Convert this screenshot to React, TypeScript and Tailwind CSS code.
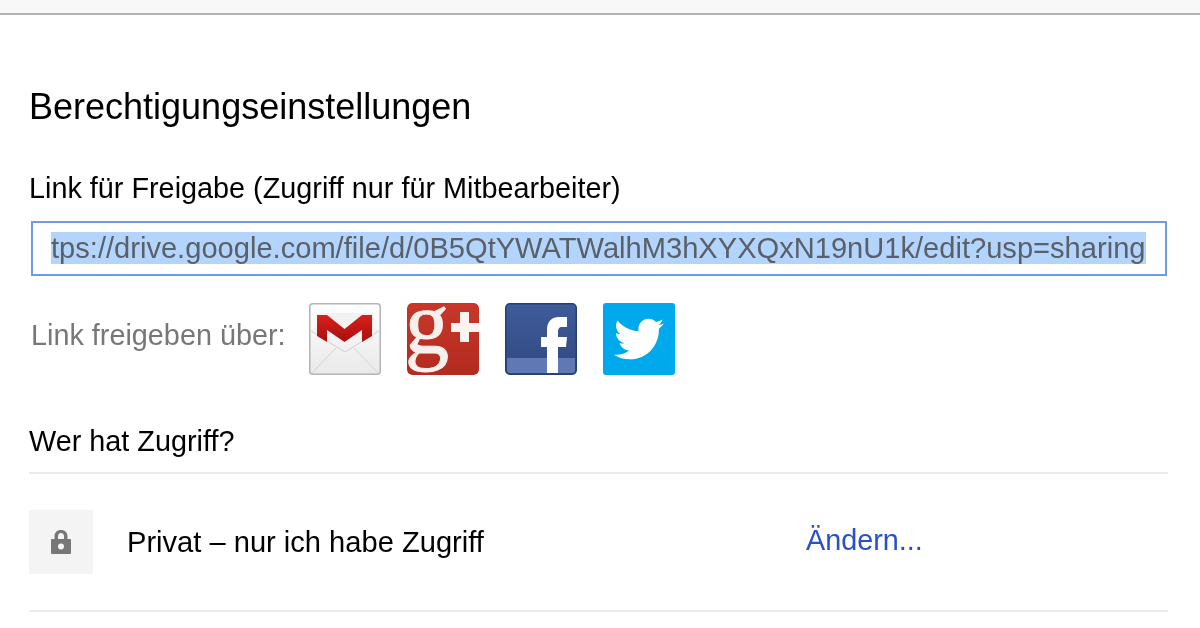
import React from "react";
import { FaTwitter } from "react-icons/fa";

const Gmail = () => (
  <svg width="72" height="72" viewBox="0 0 72 72" className="shrink-0">
    <defs>
      <linearGradient id="gm" x1="0" y1="0" x2="0" y2="1">
        <stop offset="0" stopColor="#ffffff" />
        <stop offset="1" stopColor="#e9e9e9" />
      </linearGradient>
      <linearGradient id="gr" x1="0" y1="0" x2="0" y2="1">
        <stop offset="0" stopColor="#d8201c" />
        <stop offset="1" stopColor="#a80f0f" />
      </linearGradient>
    </defs>
    <rect x="0.75" y="0.75" width="70.5" height="70.5" rx="3" fill="url(#gm)" stroke="#b4b4b4" strokeWidth="1.5" />
    <path d="M2 28 L8 24 V10 H64 V24 L70 28 L36 50 Z" fill="#f2f2f2" />
    <path d="M2 28 L36 49 L70 28" fill="none" stroke="#cfcfcf" strokeWidth="1" />
    <path d="M3 70 L27 45 M69 70 L45 45" stroke="#d4d4d4" strokeWidth="1" />
    <path d="M8 12 H18 L35.500 26 L53 12 H63 V33 L53 39 V27 L35.500 39 L18 27 V39 L8 33 Z" fill="url(#gr)" />
  </svg>
);

const GPlus = () => (
  <svg width="72" height="72" viewBox="0 0 72 72" className="shrink-0 rounded-[5px]">
    <defs>
      <linearGradient id="gp" x1="0" y1="0" x2="0" y2="1">
        <stop offset="0" stopColor="#c8382a" />
        <stop offset="1" stopColor="#b32a1e" />
      </linearGradient>
    </defs>
    <rect width="72" height="72" rx="5" fill="url(#gp)" />
    <text x="-2" y="50" fontFamily="'Liberation Serif', serif" fontSize="88" fontWeight="400" fill="#f7efec" stroke="#f7efec" strokeWidth="1">g</text>
    <rect x="53" y="9" width="9" height="30" fill="#fbf3f0" />
    <rect x="44" y="20" width="28" height="9" fill="#fbf3f0" />
  </svg>
);

const Facebook = () => (
  <svg width="72" height="72" viewBox="0 0 72 72" className="shrink-0">
    <defs>
      <linearGradient id="fb" x1="0" y1="0" x2="0" y2="1">
        <stop offset="0" stopColor="#3f5b9b" />
        <stop offset="1" stopColor="#30497f" />
      </linearGradient>
    </defs>
    <rect x="0.75" y="0.75" width="70.5" height="70.5" rx="4" fill="url(#fb)" stroke="#24406f" strokeWidth="1.5" />
    <path d="M2 55 H70 V67 Q70 70 67 70 H5 Q2 70 2 67 Z" fill="#6079b4" />
    <path d="M42 70 V44 H36 V34 H42 V27 C42 18 47 14 54 14 H62 V24 H57 C54 24 53 26 53 29 V34 H62 L61 44 H53 V70 Z" fill="#ffffff" />
  </svg>
);

const Twitter = () => (
  <div className="w-[72px] h-[72px] shrink-0 rounded-[3px] bg-[#00a9ec] flex items-center justify-center text-white">
    <FaTwitter size={50} />
  </div>
);

export default function App() {
  return (
    <div className="w-[1200px] h-[628px] overflow-hidden bg-white font-['Liberation_Sans',Arial,sans-serif] text-black blur-[0.5px]">
      <div className="h-[15px] bg-[#f8f8f8] border-b-2 border-[#b2b2b2]" />
      <div className="pl-[29px] pr-[32px]">
        <h1 className="mt-[72px] text-[36px] leading-[40px] font-normal text-black">Berechtigungseinstellungen</h1>
        <p className="mt-[46px] text-[28.8px] leading-[30px] text-black">Link für Freigabe (Zugriff nur für Mitbearbeiter)</p>
        <div className="mt-[18px] ml-[2px] mr-[1px] h-[55px] border-2 border-[#6f9ae8] flex items-center pl-[18px] pb-[2px]">
          <span className="whitespace-nowrap bg-[#b3d4fd] text-[#5a6068] text-[29.1px] leading-[32px]">tps://drive.google.com/file/d/0B5QtYWATWalhM3hXYXQxN19nU1k/edit?usp=sharing</span>
        </div>
        <div className="mt-[27px] flex items-center">
          <span className="ml-[2px] mb-[8px] w-[278px] text-[28.8px] leading-[30px] text-[#777]">Link freigeben über:</span>
          <div className="flex gap-[26px]">
            <Gmail />
            <GPlus />
            <Facebook />
            <Twitter />
          </div>
        </div>
        <h2 className="mt-[51px] text-[28.8px] leading-[30px] font-normal text-black">Wer hat Zugriff?</h2>
        <div className="mt-[16px] border-t-2 border-b-2 border-[#ebebeb] h-[140px] flex items-center">
          <div className="w-[64px] h-[64px] bg-[#f4f4f4] flex items-center justify-center mr-[34px]">
            <svg width="22" height="26" viewBox="0 0 22 26">
              <path fillRule="evenodd" d="M4.500 10 V7.500 C4.500 3.500 7 1 11 1 C15 1 17.500 3.500 17.500 7.500 V10 H20 Q21 10 21 11 V24 Q21 25 20 25 H2 Q1 25 1 24 V11 Q1 10 2 10 Z M8 10 H14 V7.500 C14 5.500 13 4 11 4 C9 4 8 5.500 8 7.500 Z M11 14.500 A3 3 0 1 0 11 20.500 A3 3 0 1 0 11 14.500 Z" fill="#777" />
            </svg>
          </div>
          <span className="w-[679px] text-[29.1px] leading-[30px] text-black">Privat – nur ich habe Zugriff</span>
          <span className="text-[28.8px] leading-[30px] -mt-[4px] text-[#2a4fc8]">Ändern...</span>
        </div>
      </div>
    </div>
  );
}
